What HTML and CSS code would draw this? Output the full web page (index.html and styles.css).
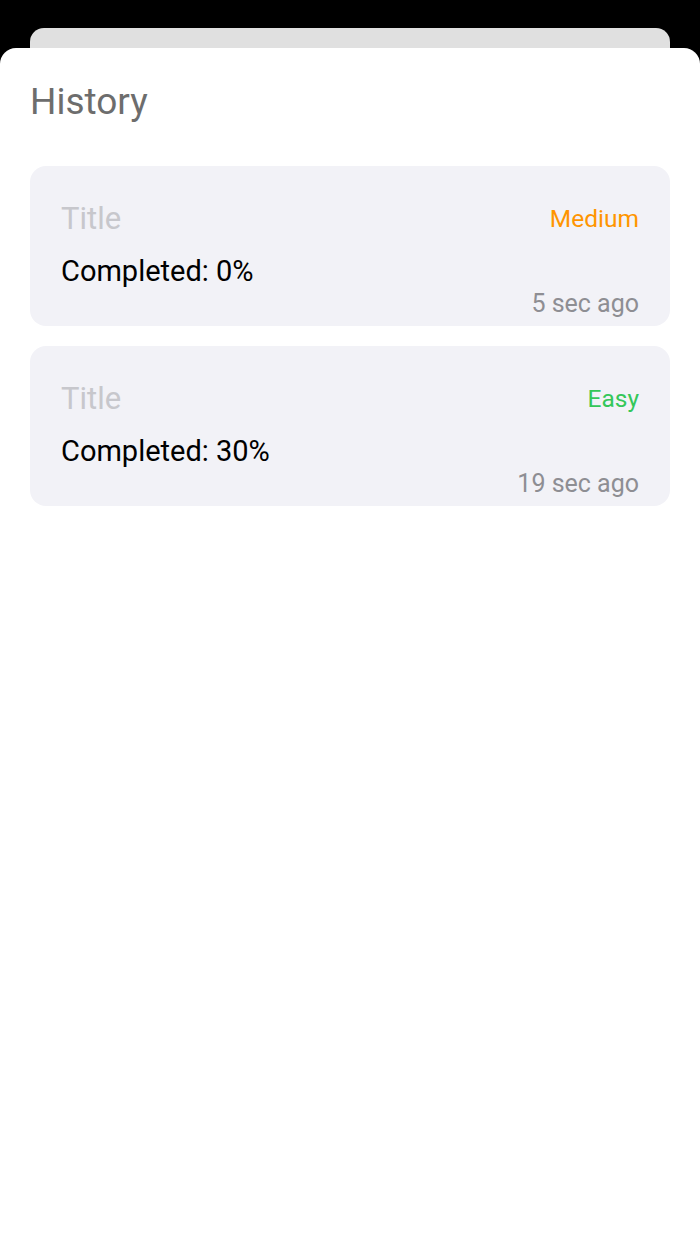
FILE: index.html
```html
<!DOCTYPE html>
<html>
<head>
<meta charset="utf-8">
<link rel="stylesheet" href="styles.css">
</head>
<body>
<div class="back-card"></div>
<div class="sheet">
  <h1 class="heading">History</h1>
  <div class="list">
    <div class="card">
      <div class="row">
        <span class="title">Title</span>
        <span class="level medium">Medium</span>
      </div>
      <div class="completed">Completed: 0%</div>
      <div class="time">5 sec ago</div>
    </div>
    <div class="card">
      <div class="row">
        <span class="title">Title</span>
        <span class="level easy">Easy</span>
      </div>
      <div class="completed">Completed: 30%</div>
      <div class="time">19 sec ago</div>
    </div>
  </div>
</div>
</body>
</html>
```
FILE: styles.css
```css
html, body {
  margin: 0;
  padding: 0;
  background: #000;
  height: 100%;
}
body {
  font-family: Roboto, "Liberation Sans", sans-serif;
  display: flex;
  flex-direction: column;
}
.back-card {
  margin: 28px 30px 0;
  height: 20px;
  background: #e0e0e0;
  border-radius: 14px 14px 0 0;
  flex: none;
}
.sheet {
  flex: 1;
  background: #fff;
  border-radius: 16px 16px 0 0;
  padding: 31px 30px 0;
}
.heading {
  margin: 0;
  font-size: 37px;
  line-height: 46px;
  font-weight: 400;
  color: #6d6d6d;
}
.list {
  margin-top: 41px;
  display: flex;
  flex-direction: column;
  gap: 20px;
}
.card {
  background: #f2f2f7;
  border-radius: 16px;
  height: 160px;
  box-sizing: border-box;
  padding: 35px 31px 7px;
  display: flex;
  flex-direction: column;
}
.row {
  display: flex;
  justify-content: space-between;
  align-items: center;
  height: 36px;
}
.title {
  font-size: 31px;
  line-height: 36px;
  color: #c7c7cc;
}
.level {
  font-size: 24.5px;
  line-height: 30px;
  margin-bottom: 1px;
}
.medium { color: #ff9500; }
.easy { color: #34c759; }
.completed {
  margin-top: 17px;
  font-size: 29px;
  line-height: 34px;
  color: #000;
}
.time {
  margin-top: 2px;
  align-self: flex-end;
  font-size: 25px;
  line-height: 28px;
  color: #8e8e93;
}
```
